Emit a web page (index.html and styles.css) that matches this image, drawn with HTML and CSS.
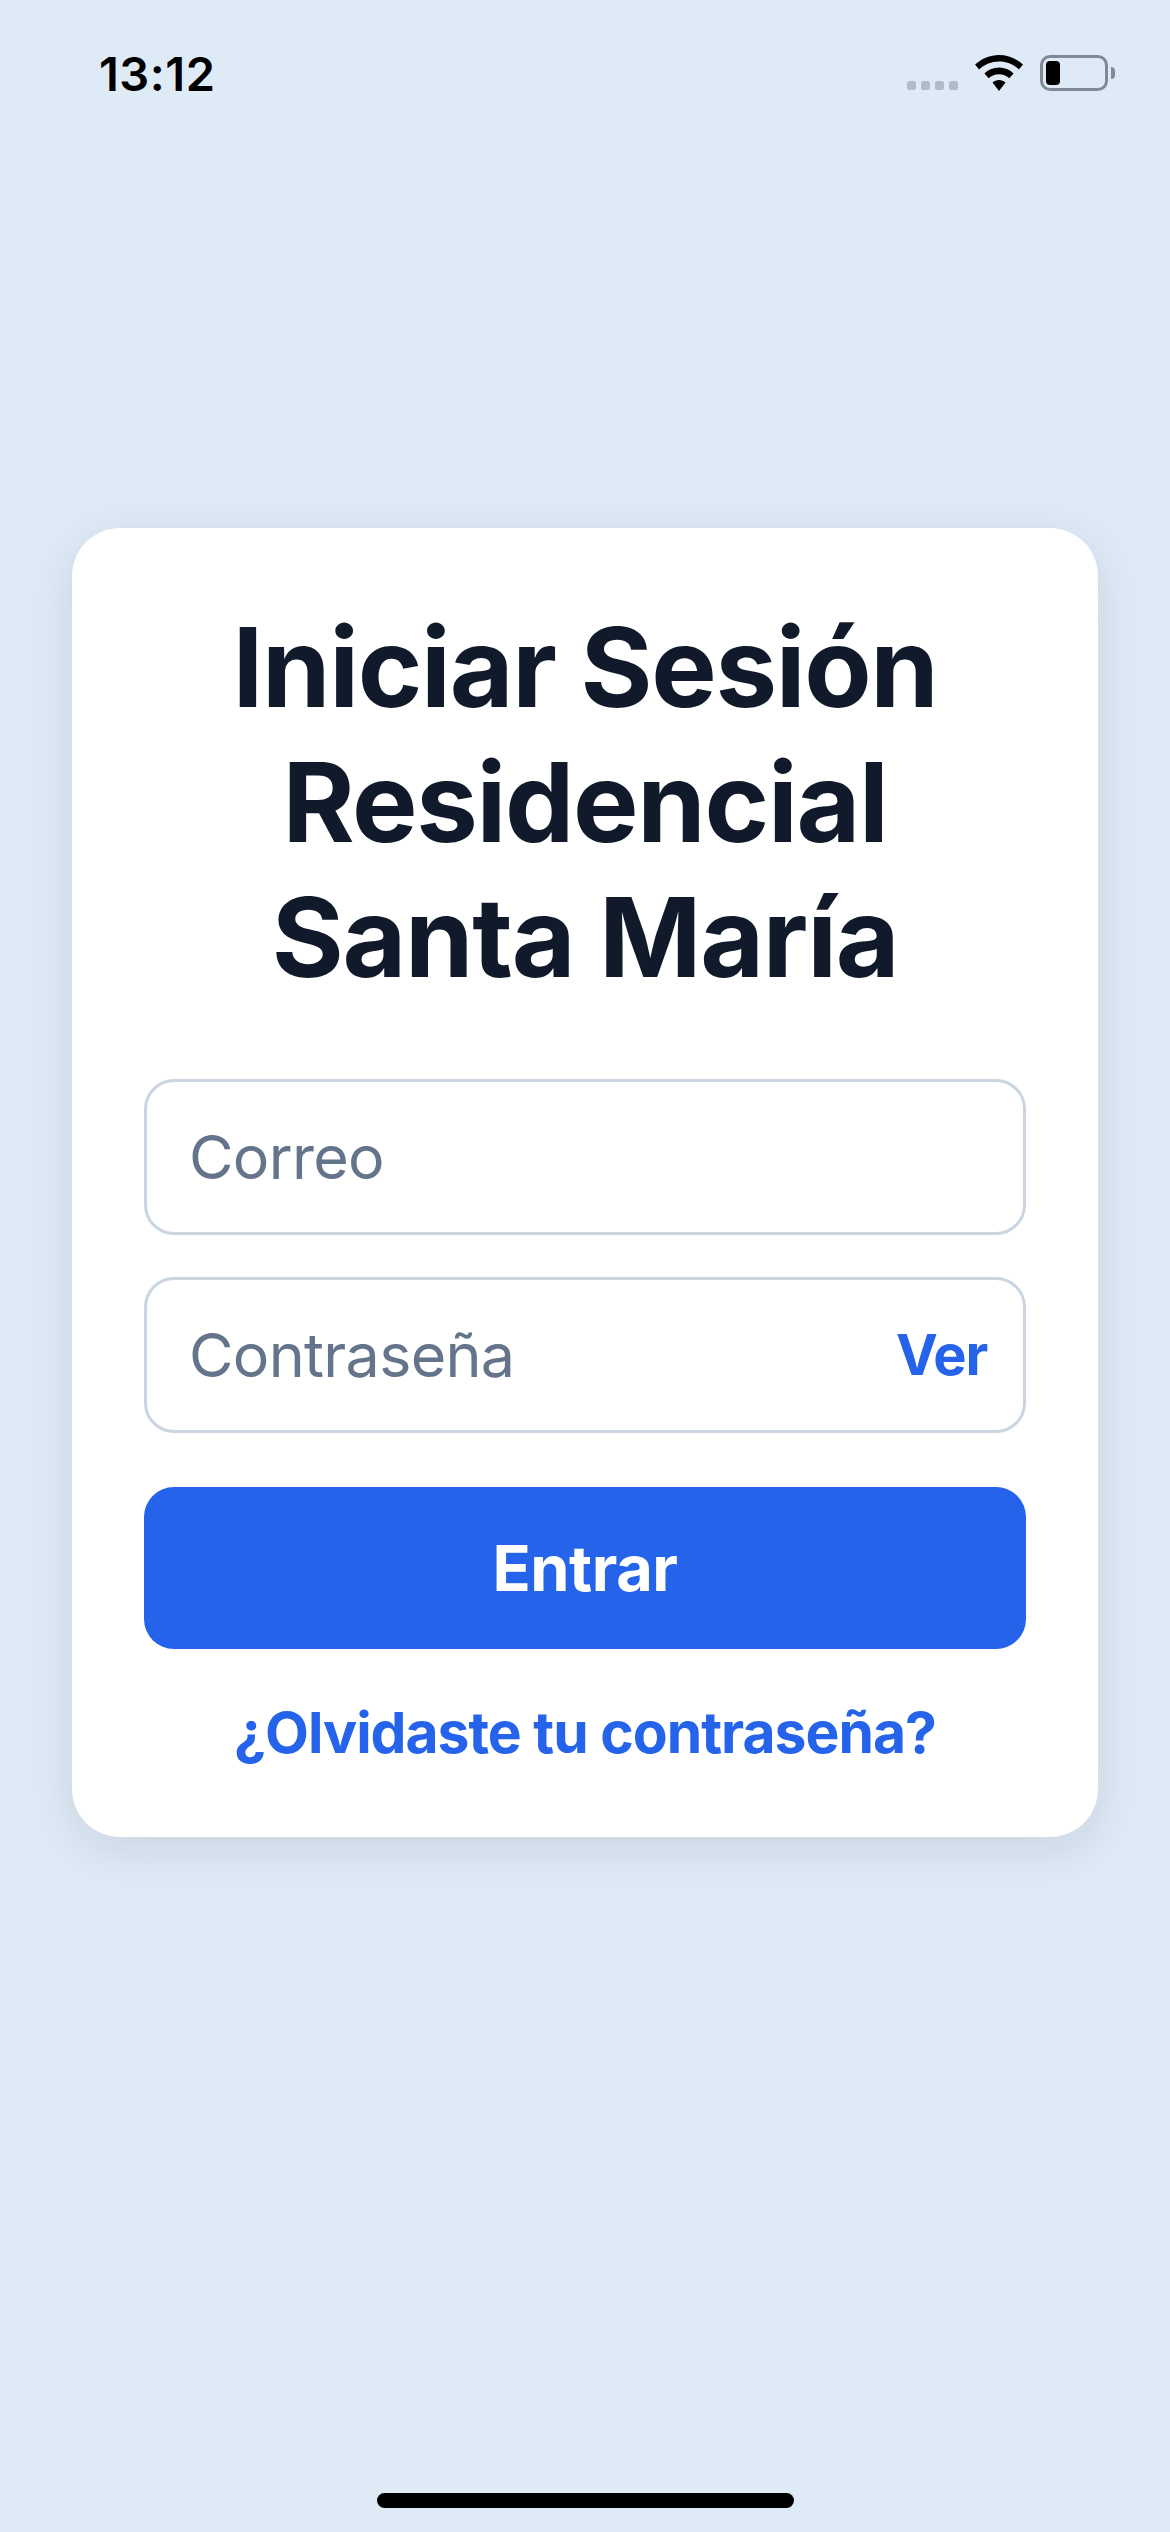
FILE: index.html
```html
<!DOCTYPE html>
<html lang="es">
<head>
<meta charset="utf-8">
<title>Iniciar Sesión</title>
<link rel="stylesheet" href="styles.css">
</head>
<body>
<div class="screen">
  <header class="status">
    <span class="time">13:12</span>
    <div class="status-icons">
      <div class="dots"><i></i><i></i><i></i><i></i></div>
      <svg class="wifi" width="48" height="36" viewBox="0 0 48 36">
        <path d="M24 0C15 0 7 3.400 0 9.600L4.200 14.400C9.600 9.400 16.500 6.600 24 6.600S38.400 9.400 43.800 14.400L48 9.600C41 3.400 33 0 24 0Z"/>
        <path d="M24 12.600C18.500 12.600 13.400 14.700 9.400 18.400L13.700 23.200C16.500 20.700 20.100 19.200 24 19.200S31.500 20.700 34.300 23.200L38.600 18.400C34.600 14.700 29.500 12.600 24 12.600Z"/>
        <path d="M24 25C21.500 25 19.300 25.900 17.500 27.500L24 36L30.500 27.500C28.700 25.900 26.500 25 24 25Z"/>
      </svg>
      <div class="battery"><div class="battery-body"><div class="battery-level"></div></div><div class="battery-cap"></div></div>
    </div>
  </header>
  <main class="card">
    <h1 class="title">Iniciar Sesión<br>Residencial<br>Santa María</h1>
    <div class="field"><span class="placeholder">Correo</span></div>
    <div class="field"><span class="placeholder">Contraseña</span><span class="show">Ver</span></div>
    <div class="button">Entrar</div>
    <div class="forgot">¿Olvidaste tu contraseña?</div>
  </main>
  <div class="home"></div>
</div>
</body>
</html>
```
FILE: styles.css
```css
* { box-sizing: border-box; }
html, body { margin: 0; padding: 0; }
body { font-family: Inter, "Liberation Sans", sans-serif; background: #deeaf6; }
.screen { width: 1170px; height: 2532px; display: flex; flex-direction: column; align-items: center; position: relative; background: #deeaf6; overflow: hidden; }
.status { width: 100%; height: 110px; padding: 47px 55px 0 99px; display: flex; justify-content: space-between; align-items: flex-start; }
.time { font-size: 47px; line-height: 54px; font-weight: 600; letter-spacing: 0.5px; color: #000; }
.status-icons { display: flex; align-items: flex-end; margin-top: 8px; }
.dots { display: flex; gap: 5px; margin-bottom: 1px; }
.dots i { display: block; width: 9px; height: 9px; border-radius: 2.500px; background: #b2bcc9; }
.wifi { margin-left: 17px; fill: #000; }
.battery { display: flex; align-items: center; margin-left: 17px; }
.battery-body { width: 68px; height: 36px; border: 3px solid #7f8a96; border-radius: 10px; padding: 3px; }
.battery-level { width: 14px; height: 100%; background: #000; border-radius: 4px; }
.battery-cap { width: 4px; height: 12px; margin-left: 3px; background: #7f8a96; border-radius: 0 6px 6px 0; }
.card { width: 1026px; height: 1309px; margin-top: 418px; padding: 72px 72px 0; background: #fff; border-radius: 48px; box-shadow: 0 12px 48px rgba(15, 23, 42, 0.1); display: flex; flex-direction: column; }
.title { margin: 0 0 74px; font-size: 110px; line-height: 135px; font-weight: 700; letter-spacing: -1.300px; text-align: center; color: #111a2b; }
.field { height: 156px; margin-bottom: 42px; padding: 0 36px 0 42px; border: 3px solid #cbd5e1; border-radius: 30px; display: flex; align-items: center; justify-content: space-between; }
.placeholder { font-size: 61px; letter-spacing: -0.700px; color: #64748b; }
.show { font-size: 56px; font-weight: 700; letter-spacing: -1.200px; color: #2563eb; }
.button { height: 162px; margin-top: 12px; border-radius: 30px; background: #2563eb; color: #fff; font-size: 63px; font-weight: 700; letter-spacing: -0.400px; display: flex; align-items: center; justify-content: center; }
.forgot { margin-top: 48px; font-size: 57px; line-height: 72px; font-weight: 700; letter-spacing: -1px; text-align: center; color: #2563eb; }
.home { position: absolute; left: 377px; top: 2493px; width: 417px; height: 15px; border-radius: 8px; background: #000; }
```
